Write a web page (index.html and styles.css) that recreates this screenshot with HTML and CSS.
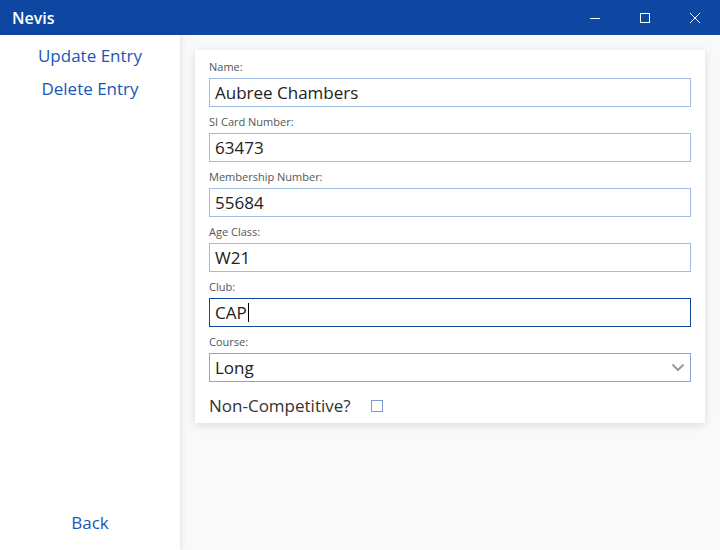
FILE: index.html
```html
<!DOCTYPE html>
<html>
<head>
<meta charset="utf-8">
<link rel="stylesheet" href="styles.css">
</head>
<body>
<div class="window">
  <header class="titlebar">
    <span class="title">Nevis</span>
    <div class="controls">
      <span class="ctl"><svg width="12" height="12" viewBox="0 0 12 12"><line x1="1" y1="6.5" x2="11" y2="6.5" stroke="#fff" stroke-width="1"/></svg></span>
      <span class="ctl"><svg width="12" height="12" viewBox="0 0 12 12"><rect x="1.5" y="1.5" width="9" height="9" fill="none" stroke="#fff" stroke-width="1"/></svg></span>
      <span class="ctl"><svg width="12" height="12" viewBox="0 0 12 12"><path d="M1 1 L11 11 M11 1 L1 11" stroke="#fff" stroke-width="1"/></svg></span>
    </div>
  </header>
  <div class="body">
    <nav class="sidebar">
      <div class="nav-top">
        <a class="nav-link">Update Entry</a>
        <a class="nav-link">Delete Entry</a>
      </div>
      <a class="nav-link">Back</a>
    </nav>
    <main class="main">
      <div class="card">
        <div class="field">
          <label>Name:</label>
          <div class="input">Aubree Chambers</div>
        </div>
        <div class="field">
          <label>SI Card Number:</label>
          <div class="input">63473</div>
        </div>
        <div class="field">
          <label>Membership Number:</label>
          <div class="input">55684</div>
        </div>
        <div class="field">
          <label>Age Class:</label>
          <div class="input">W21</div>
        </div>
        <div class="field">
          <label>Club:</label>
          <div class="input focused">CAP<span class="caret"></span></div>
        </div>
        <div class="field">
          <label>Course:</label>
          <div class="input select"><span>Long</span>
            <svg width="14" height="9" viewBox="0 0 14 9"><path d="M1.5 1.5 L7 7 L12.5 1.5" fill="none" stroke="#999" stroke-width="2"/></svg>
          </div>
        </div>
        <div class="check-row">
          <span>Non-Competitive?</span>
          <span class="checkbox"></span>
        </div>
      </div>
    </main>
  </div>
</div>
</body>
</html>
```
FILE: styles.css
```css
* { box-sizing: border-box; }
html, body { margin: 0; padding: 0; }
body {
  width: 720px;
  height: 550px;
  font-family: "Open Sans", "DejaVu Sans", sans-serif;
  overflow: hidden;
}
.window { display: flex; flex-direction: column; height: 550px; }
.titlebar {
  height: 35px;
  background: #0d47a1;
  color: #fff;
  display: flex;
  align-items: center;
  justify-content: space-between;
  flex-shrink: 0;
}
.title { font-size: 16px; padding-left: 12px; font-weight: 600; }
.controls { display: flex; height: 100%; }
.ctl {
  width: 50px;
  display: flex;
  align-items: center;
  justify-content: center;
}
.body { flex: 1; display: flex; background: #f9f9f9; }
.sidebar {
  width: 180px;
  background: #fff;
  display: flex;
  flex-direction: column;
  justify-content: space-between;
  align-items: center;
  padding: 9px 0 15px;
  box-shadow: 2px 0 5px rgba(0,0,0,0.08);
  position: relative;
  z-index: 1;
}
.nav-top { display: flex; flex-direction: column; align-items: center; gap: 9px; }
.nav-link { color: #1a56b8; font-size: 17px; line-height: 24px; }
.main { flex: 1; padding: 15px 15px 0 15px; }
.card {
  background: #fff;
  box-shadow: 0 2px 8px rgba(0,0,0,0.12);
  padding: 9px 14px 6px;
}
.field { display: flex; flex-direction: column; margin-bottom: 7px; }
.field label { font-size: 11px; color: #555; line-height: 16px; margin-bottom: 3px; }
.input {
  height: 29px;
  border: 1px solid #9fbde2;
  font-size: 17px;
  color: #222;
  padding: 0 5px;
  display: flex;
  align-items: center;
}
.input.focused { border-color: #0d47a1; }
.caret { display: inline-block; width: 1px; height: 19px; background: #000; margin-left: 1px; }
.select { justify-content: space-between; border-color: #8aa6d6; padding-right: 5px; }
.check-row {
  display: flex;
  align-items: center;
  gap: 20px;
  font-size: 17px;
  color: #333;
  margin-top: 12px;
}
.checkbox { width: 12px; height: 12px; border: 1px solid #7c9bd0; }
```
